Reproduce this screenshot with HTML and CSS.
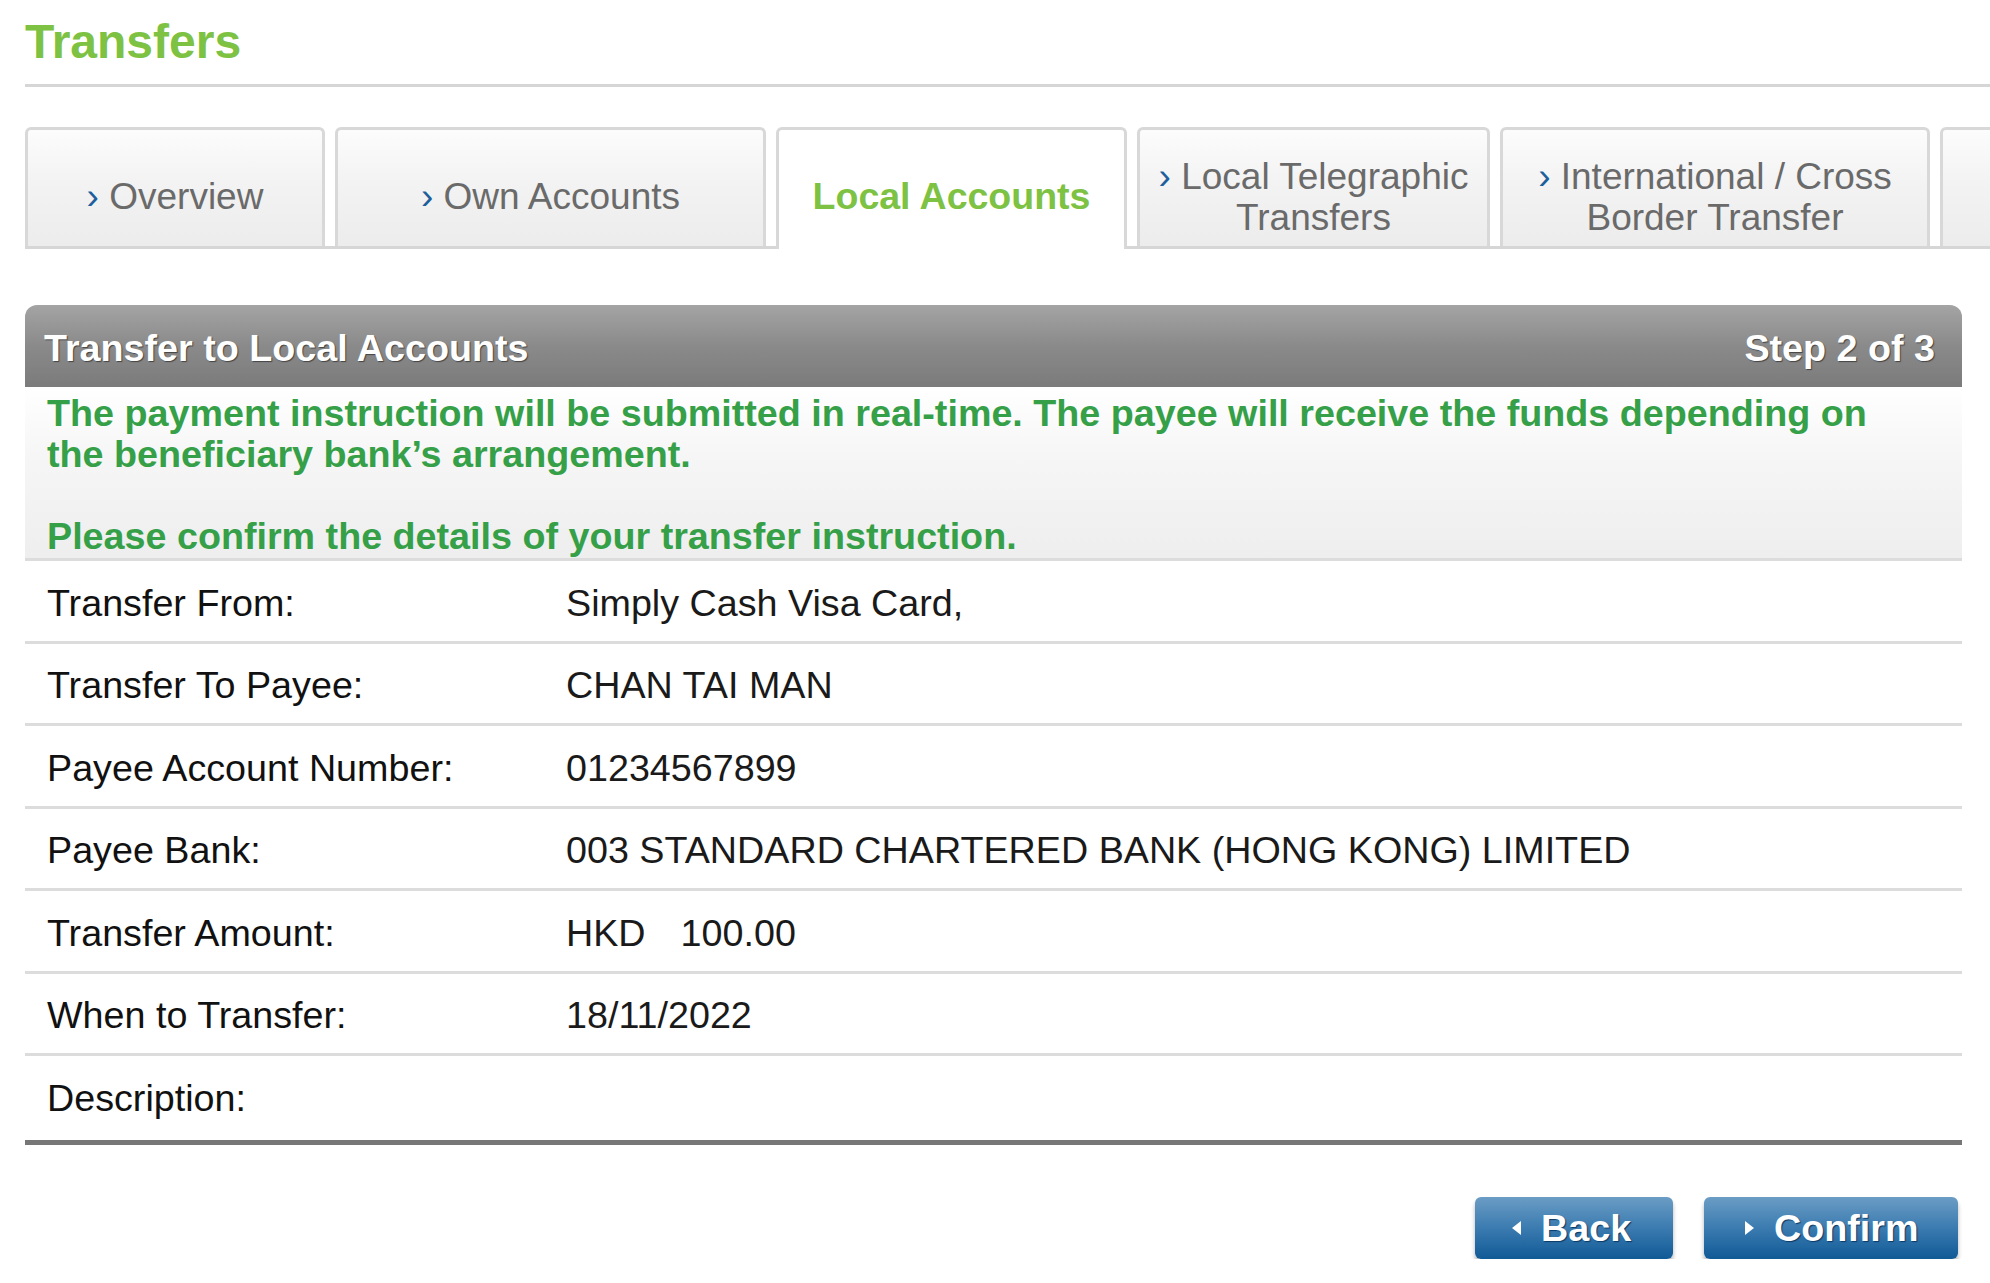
FILE: index.html
```html
<!DOCTYPE html>
<html lang="en">
<head>
<meta charset="utf-8">
<title>Transfers</title>
<link rel="stylesheet" href="styles.css">
</head>
<body>
<div class="page">
  <div class="page-head">
    <h1 class="page-title">Transfers</h1>
  </div>

  <div class="tabs">
    <div class="tab tab-overview"><span><span class="chev">›</span> Overview</span></div>
    <div class="tab tab-own"><span><span class="chev">›</span> Own Accounts</span></div>
    <div class="tab tab-local active"><span>Local Accounts</span></div>
    <div class="tab tab-ltt"><span><span class="chev">›</span> Local Telegraphic<br>Transfers</span></div>
    <div class="tab tab-intl"><span><span class="chev">›</span> International / Cross<br>Border Transfer</span></div>
    <div class="tab tab-more"><span></span></div>
  </div>

  <div class="panel">
    <div class="panel-head">
      <span>Transfer to Local Accounts</span>
      <span>Step 2 of 3</span>
    </div>
    <div class="notice">
      <div>The payment instruction will be submitted in real-time. The payee will receive the funds depending on<br>the beneficiary bank’s arrangement.</div>
      <div class="notice-gap">Please confirm the details of your transfer instruction.</div>
    </div>
    <div class="row"><div class="label">Transfer From:</div><div class="value">Simply Cash Visa Card,</div></div>
    <div class="row"><div class="label">Transfer To Payee:</div><div class="value">CHAN TAI MAN</div></div>
    <div class="row"><div class="label">Payee Account Number:</div><div class="value">01234567899</div></div>
    <div class="row"><div class="label">Payee Bank:</div><div class="value">003 STANDARD CHARTERED BANK (HONG KONG) LIMITED</div></div>
    <div class="row"><div class="label">Transfer Amount:</div><div class="value">HKD<span class="amount">100.00</span></div></div>
    <div class="row"><div class="label">When to Transfer:</div><div class="value">18/11/2022</div></div>
    <div class="row row-last"><div class="label">Description:</div><div class="value"></div></div>
  </div>

  <div class="actions">
    <button class="btn btn-back" type="button"><span class="tri tri-left"></span>Back</button>
    <button class="btn btn-confirm" type="button"><span class="tri tri-right"></span>Confirm</button>
  </div>
</div>
</body>
</html>
```

FILE: styles.css
```css
html, body {
  margin: 0;
  padding: 0;
  background: #ffffff;
  overflow: hidden;
}

body {
  font-family: "Liberation Sans", Arial, sans-serif;
  font-size: 37.7px;
  color: #1a1a1a;
}

.page {
  padding-left: 25px;
  width: 1965px;
}

.page-head {
  padding-top: 15px;
  padding-bottom: 16px;
  border-bottom: 3px solid #d6d6d6;
}

.page-title {
  margin: 0;
  font-size: 48px;
  line-height: 53px;
  font-weight: bold;
  color: #7dc242;
}

/* Tabs */
.tabs {
  display: flex;
  gap: 10px;
  margin-top: 40px;
  border-bottom: 3px solid #d6d6d6;
}

.tab {
  flex-shrink: 0;
  box-sizing: border-box;
  height: 119px;
  border: 3px solid #d8d8d8;
  border-bottom: none;
  border-radius: 6px 6px 0 0;
  background: linear-gradient(#fcfcfc 0%, #f3f3f3 45%, #ececec 100%);
  display: flex;
  align-items: center;
  justify-content: center;
  text-align: center;
  padding-top: 16px;
  line-height: 41px;
  font-size: 37px;
  color: #6a6a6a;
}

.tab.active {
  height: 122px;
  margin-bottom: -3px;
  padding-bottom: 3px;
  background: #ffffff;
  color: #7dc242;
  font-weight: bold;
  font-size: 37.5px;
}

.chev {
  color: #1c5f9c;
}

.tab-overview { width: 300px; }
.tab-own { width: 431px; }
.tab-local { width: 351px; }
.tab-ltt { width: 353px; padding-top: 18px; }
.tab-intl { width: 430px; padding-top: 18px; }
.tab-more { width: 200px; }

/* Panel */
.panel {
  width: 1937px;
  margin-top: 56px;
  border-bottom: 5px solid #777777;
}

.panel-head {
  height: 82px;
  box-sizing: border-box;
  display: flex;
  justify-content: space-between;
  align-items: center;
  padding: 4px 27px 0 19px;
  border-radius: 12px 12px 0 0;
  background: linear-gradient(#a4a4a4 0%, #8a8a8a 50%, #7b7b7b 100%);
  color: #ffffff;
  font-weight: bold;
  text-shadow: 1px 1px 1px #444444;
}

.notice {
  padding: 6px 22px 1px;
  line-height: 41px;
  font-weight: bold;
  color: #35a048;
  background: linear-gradient(#ffffff 0%, #f6f6f6 40%, #eeeeee 100%);
  border-bottom: 3px solid #dcdcdc;
}

.notice-gap {
  margin-top: 41px;
}

.row {
  display: grid;
  grid-template-columns: 519px 1fr;
  align-items: center;
  height: 74.5px;
  padding-top: 5px;
  padding-left: 22px;
  border-bottom: 3px solid #dcdcdc;
}

.row-last {
  height: 84px;
  padding-top: 0;
  border-bottom: none;
}

.label {
  color: #111111;
}

.value {
  color: #1a1a1a;
}

.amount {
  margin-left: 35px;
}

/* Buttons */
.actions {
  width: 1933px;
  display: flex;
  justify-content: flex-end;
  gap: 31px;
  margin-top: 52px;
}

.btn {
  height: 62px;
  display: flex;
  align-items: center;
  gap: 20px;
  padding: 0 40px 0 37px;
  border: none;
  border-radius: 6px;
  background: linear-gradient(#6b9dc5 0%, #3b7bb0 50%, #105a96 100%);
  box-shadow: 0 4px 4px rgba(0, 0, 0, 0.3);
  color: #ffffff;
  font-family: "Liberation Sans", Arial, sans-serif;
  font-size: 37.7px;
  font-weight: bold;
  text-shadow: 1px 1px 1px #0a3a66;
}

.btn-back { width: 198px; }
.btn-confirm { width: 254px; padding-left: 41px; }

.tri {
  width: 0;
  height: 0;
  border-top: 7px solid transparent;
  border-bottom: 7px solid transparent;
}

.tri-left {
  border-right: 9px solid #ffffff;
}

.tri-right {
  border-left: 9px solid #ffffff;
}
```
